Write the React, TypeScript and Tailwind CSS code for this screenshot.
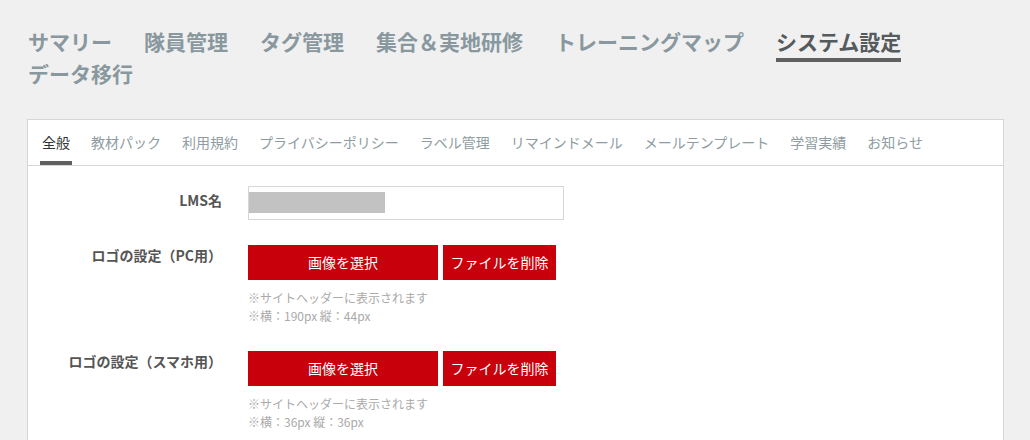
import React from "react";

const navItems = ["サマリー", "隊員管理", "タグ管理", "集合＆実地研修", "トレーニングマップ", "システム設定", "データ移行"];
const tabs = ["全般", "教材パック", "利用規約", "プライバシーポリシー", "ラベル管理", "リマインドメール", "メールテンプレート", "学習実績", "お知らせ"];

const LogoRow = ({ label, size }: { label: string; size: string }) => {
  return (
    <div className="flex items-start mb-[26px]">
      <div className="w-[194px] shrink-0 text-right text-[14px] leading-[20px] font-bold text-[#555555]">
        {label}
      </div>
      <div className="ml-[26px]">
        <div className="flex gap-[5px]">
          <button className="w-[190px] h-[35px] bg-[#c8000b] text-white text-[14px]">画像を選択</button>
          <button className="w-[113px] h-[35px] bg-[#c8000b] text-white text-[14px]">ファイルを削除</button>
        </div>
        <div className="mt-[9px] text-[12px] leading-[18px] text-[#aaaaaa]">
          <div>※サイトヘッダーに表示されます</div>
          <div>{size}</div>
        </div>
      </div>
    </div>
  );
};

const App = () => {
  return (
    <div
      className="min-h-[440px] bg-[#f0f0f0] pt-[25px] pl-[27px] pr-[26px]"
      style={{ fontFamily: '"Noto Sans CJK JP", "Noto Sans", sans-serif' }}
    >
      <nav className="flex flex-wrap pl-[1px] gap-x-[32px] text-[21px] font-bold leading-[32px]">
        {navItems.map((item) => (
          <div key={item} className={item === "システム設定" ? "relative text-[#555a5c]" : "text-[#88989e]"}>
            {item}
            {item === "システム設定" && (
              <span className="absolute left-0 right-0 bottom-[-5px] h-[4px] bg-[#606060]" />
            )}
          </div>
        ))}
      </nav>

      <div className="mt-[30px] bg-white border border-[#d6d6d6] border-b-0 min-h-[330px]">
        <div className="flex gap-[17px] pl-[12px] h-[46px] border-b border-[#d6d6d6]">
          {tabs.map((tab, i) => (
            <div
              key={tab}
              className={
                i === 0
                  ? "flex items-center px-[2px] text-[14px] text-[#333333] border-b-4 border-[#606060] pt-[4px]"
                  : "flex items-center px-[2px] text-[14px] text-[#8e9ca1] border-b-4 border-transparent pt-[4px]"
              }
            >
              {tab}
            </div>
          ))}
        </div>

        <div className="pt-[20px]">
          <div className="flex items-start mb-[25px]">
            <div className="w-[194px] shrink-0 pt-[4px] text-right text-[14px] leading-[20px] font-bold text-[#555555]">
              LMS名
            </div>
            <div className="ml-[26px] w-[316px] h-[34px] border border-[#d6d6d6] pt-[5px]">
              <div className="w-[136px] h-[21px] bg-[#c2c2c2]" />
            </div>
          </div>

          <LogoRow label="ロゴの設定（PC用）" size="※横：190px 縦：44px" />
          <LogoRow label="ロゴの設定（スマホ用）" size="※横：36px 縦：36px" />
        </div>
      </div>
    </div>
  );
};

export default App;
